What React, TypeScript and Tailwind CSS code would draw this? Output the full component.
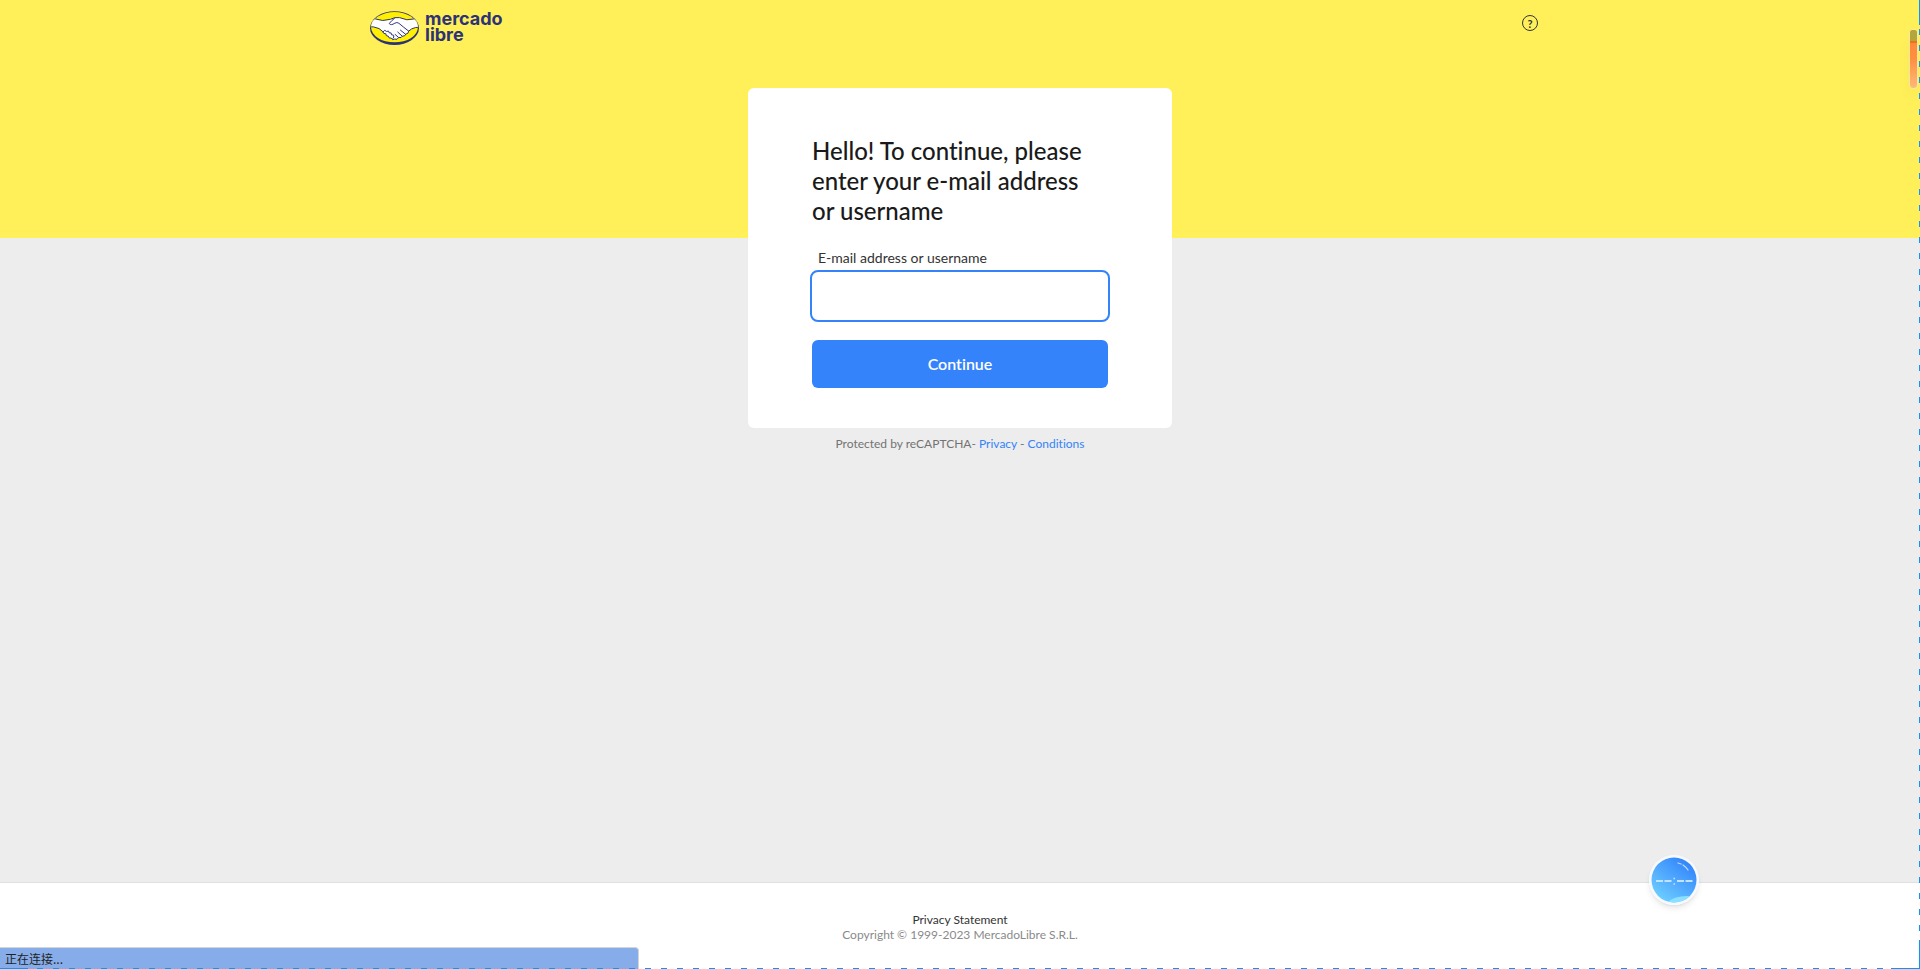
import { useState } from 'react'

function HandshakeLogo() {
  return (
    <svg viewBox="12 14 148 103" className="h-[34px] w-[49px]" aria-hidden="true">
      <defs>
        <clipPath id="oval">
          <ellipse cx="86" cy="63" rx="71" ry="46" />
        </clipPath>
      </defs>
      <ellipse cx="86" cy="66" rx="74" ry="51" fill="#2d3277" />
      <ellipse cx="86" cy="63" rx="71" ry="46" fill="#ffef00" />
      <g clipPath="url(#oval)" stroke="#2d3277" strokeWidth="3" strokeLinejoin="round" strokeLinecap="round">
        <path
          fill="#fff"
          d="M5 38 L28 38 Q50 47 74 39 Q86 32 101 34 Q124 45 145 38 L168 36 L168 63 L150 64 Q136 67 129 75 Q129 83 120 84 Q119 91 110 90 Q107 97 99 94 Q94 103 87 99 Q79 104 76 96 Q68 98 67 90 Q59 91 60 83 Q52 84 51 77 Q42 65 22 62 L5 62 Z"
        />
        <path
          fill="none"
          d="M86 36 Q78 42 70 52 Q75 59 87 51 Q93 47 99 51 Q112 62 129 75 M104 72 L119 84 M96 78 L109 90 M88 85 L98 94 M51 77 Q57 68 62 76 Q70 72 70 80 Q78 78 77 86 Q86 85 84 93 L81 97"
        />
      </g>
    </svg>
  )
}

function Header() {
  return (
    <header className="h-[238px] bg-[#fff059]">
      <div className="mx-auto flex max-w-[1200px] items-start justify-between pt-[11px] pr-[22px] pl-2.5">
        <a href="#" className="flex items-start gap-1.5 text-[#2d3277]">
          <HandshakeLogo />
          <span className="font-['Inter',sans-serif] text-lg leading-4 font-bold">
            mercado
            <br />
            libre
          </span>
        </a>
        <button
          type="button"
          aria-label="Help"
          className="mt-1 flex size-4 items-center justify-center rounded-full border border-[#333] text-[11px] leading-none font-bold text-[#333]"
        >
          ?
        </button>
      </div>
    </header>
  )
}

function LoginCard() {
  const [user, setUser] = useState('')

  return (
    <form
      className="w-full max-w-[424px] rounded-md bg-white px-16 pt-12 pb-10"
      onSubmit={(e) => e.preventDefault()}
    >
      <h1 className="pr-4 text-2xl leading-[30px] font-medium text-[#1a1a1a]">
        Hello! To continue, please enter your e-mail address or username
      </h1>
      <label htmlFor="user" className="mt-[22px] block px-1.5 text-sm leading-5 text-[#333]">
        E-mail address or username
      </label>
      <div className="-mx-0.5 mt-0.5">
        <input
          id="user"
          type="text"
          value={user}
          onChange={(e) => setUser(e.target.value)}
          className="block h-[52px] w-full rounded-lg border-2 border-[#3483fa] bg-white px-3 text-base outline-none"
        />
      </div>
      <button
        type="submit"
        className="mt-[18px] block h-12 w-full rounded-md bg-[#3483fa] text-base font-semibold text-white"
      >
        Continue
      </button>
    </form>
  )
}

function Footer() {
  return (
    <footer className="border-t border-[#e0e0e0] bg-white pt-[29px] pb-[27px] text-center text-xs leading-[15px]">
      <a href="#" className="block text-[#333]">
        Privacy Statement
      </a>
      <p className="text-[#8a8a8a]">Copyright © 1999-2023 MercadoLibre S.R.L.</p>
    </footer>
  )
}

// floating bubble of the desktop assistant
function Bubble() {
  return (
    <div className="fixed right-[221px] bottom-16 size-[50px] rounded-full shadow-md">
      <svg viewBox="0 0 50 50" className="size-full" aria-hidden="true">
        <defs>
          <linearGradient id="bubble" x1="0.8" y1="0.1" x2="0.2" y2="0.9">
            <stop offset="0" stopColor="#3486fb" />
            <stop offset="1" stopColor="#6ccbff" />
          </linearGradient>
          <clipPath id="bubbleClip">
            <circle cx="25" cy="25" r="22.5" />
          </clipPath>
        </defs>
        <circle cx="25" cy="25" r="25" fill="#f6faff" />
        <circle cx="25" cy="25" r="22.5" fill="url(#bubble)" />
        <g clipPath="url(#bubbleClip)">
          <ellipse cx="33" cy="46" rx="14" ry="4.5" fill="#8be0ff" transform="rotate(-8 33 46)" />
        </g>
        <path d="M29 8 l3 1 M34 10 q3 2 5 5" stroke="#b9dcff" strokeWidth="1.3" fill="none" strokeLinecap="round" />
        <path d="M7 26h7M15.5 26h7M28 26h7M36.5 26h7" stroke="#c2e3ff" strokeWidth="1.8" />
        <path d="M24.5 23.5h1.5M24.5 29h1.5" stroke="#c2e3ff" strokeWidth="1.5" />
      </svg>
    </div>
  )
}

function Overlays() {
  return (
    <>
      <Bubble />
      <div className="fixed top-[29px] right-[2px] h-[60px] w-[9px] overflow-hidden rounded border border-[#fbe7a0] bg-linear-to-b from-[#ff8533] via-[#ff8f40] to-[#ffb978] shadow-lg">
        <div className="h-[13px] border-b-2 border-[#f0701c] bg-[#b3a63c]" />
      </div>
      <div
        role="status"
        className="fixed bottom-0 left-0 h-[22px] w-1/3 max-w-[639px] rounded-tr border-t border-r border-[#d5d5d5] bg-[#86ade9] px-[5px] font-['Noto_Sans_CJK_SC',sans-serif] text-xs leading-[21px] text-[#222]"
      >
        正在连接...
      </div>
      <div className="fixed bottom-0 left-0 flex h-px w-full justify-between bg-[repeating-linear-gradient(to_right,transparent_0px,transparent_5px,#0099ff_5px,#0099ff_11px,transparent_11px,transparent_16px)]">
        <span className="w-7 bg-[#0099ff]" />
        <span className="w-[29px] bg-[#0099ff]" />
      </div>
      <div className="fixed top-0 right-0 flex h-full w-px flex-col justify-between bg-[repeating-linear-gradient(to_bottom,#0099ff_0px,#0099ff_3px,transparent_3px,transparent_13px,#0099ff_13px,#0099ff_16px)]">
        <span className="h-[25px] bg-[#0099ff]" />
        <span className="h-[29px] bg-[#0099ff]" />
      </div>
    </>
  )
}

export default function App() {
  return (
    <div className="flex min-h-screen flex-col bg-[#ededed] font-['Lato',sans-serif] [font-variant-ligatures:none]">
      <Header />
      <main className="-mt-[150px] flex flex-1 flex-col items-center">
        <LoginCard />
        <p className="mt-2 text-xs leading-4 text-[#737373]">
          Protected by reCAPTCHA-{' '}
          <a href="#" className="text-[#3483fa]">
            Privacy
          </a>{' '}
          -{' '}
          <a href="#" className="text-[#3483fa]">
            Conditions
          </a>
        </p>
      </main>
      <Footer />
      <Overlays />
    </div>
  )
}
